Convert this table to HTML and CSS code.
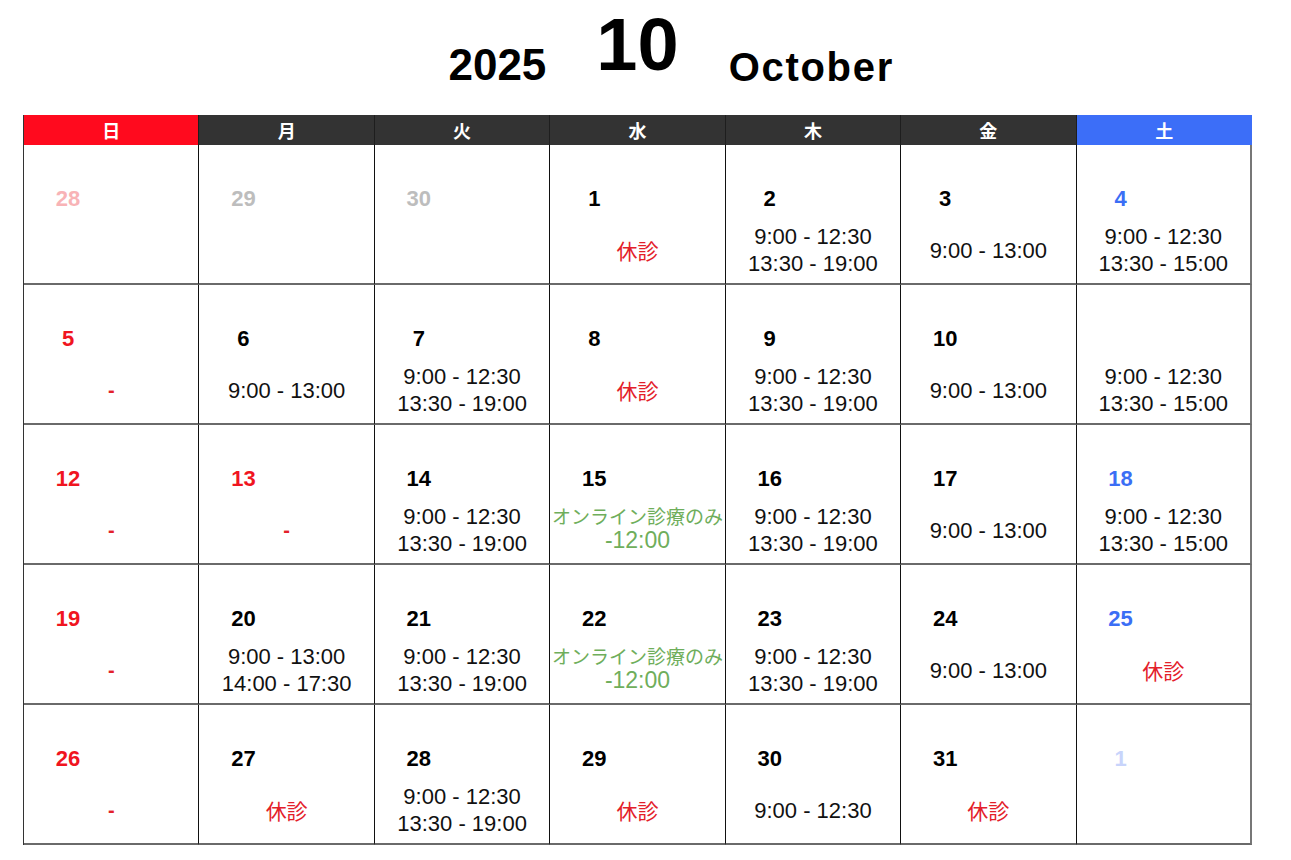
FILE: index.html
```html
<!DOCTYPE html>
<html lang="ja">
<head>
<meta charset="utf-8">
<title>2025 10 October</title>
<link rel="stylesheet" href="styles.css">
</head>
<body>
<div class="page">
  <div class="title">
    <span class="t-year">2025</span>
    <span class="t-month">10</span>
    <span class="t-name">October</span>
  </div>
  <div class="cal">
    <div class="hd sun">日</div>
    <div class="hd">月</div>
    <div class="hd">火</div>
    <div class="hd">水</div>
    <div class="hd">木</div>
    <div class="hd">金</div>
    <div class="hd sat">土</div>

    <div class="cell"><div class="num prev-sun">28</div><div class="body"></div></div>
    <div class="cell"><div class="num prev">29</div><div class="body"></div></div>
    <div class="cell"><div class="num prev">30</div><div class="body"></div></div>
    <div class="cell"><div class="num">1</div><div class="body"><span class="closed">休診</span></div></div>
    <div class="cell"><div class="num">2</div><div class="body"><span>9:00 - 12:30</span><span>13:30 - 19:00</span></div></div>
    <div class="cell"><div class="num">3</div><div class="body"><span>9:00 - 13:00</span></div></div>
    <div class="cell last"><div class="num blue">4</div><div class="body"><span>9:00 - 12:30</span><span>13:30 - 15:00</span></div></div>

    <div class="cell"><div class="num red">5</div><div class="body"><span class="dash">-</span></div></div>
    <div class="cell"><div class="num">6</div><div class="body"><span>9:00 - 13:00</span></div></div>
    <div class="cell"><div class="num">7</div><div class="body"><span>9:00 - 12:30</span><span>13:30 - 19:00</span></div></div>
    <div class="cell"><div class="num">8</div><div class="body"><span class="closed">休診</span></div></div>
    <div class="cell"><div class="num">9</div><div class="body"><span>9:00 - 12:30</span><span>13:30 - 19:00</span></div></div>
    <div class="cell"><div class="num">10</div><div class="body"><span>9:00 - 13:00</span></div></div>
    <div class="cell last"><div class="num blue"></div><div class="body"><span>9:00 - 12:30</span><span>13:30 - 15:00</span></div></div>

    <div class="cell"><div class="num red">12</div><div class="body"><span class="dash">-</span></div></div>
    <div class="cell"><div class="num red">13</div><div class="body"><span class="dash">-</span></div></div>
    <div class="cell"><div class="num">14</div><div class="body"><span>9:00 - 12:30</span><span>13:30 - 19:00</span></div></div>
    <div class="cell"><div class="num">15</div><div class="body online-body"><span class="online">オンライン診療のみ</span><span class="online-time">-12:00</span></div></div>
    <div class="cell"><div class="num">16</div><div class="body"><span>9:00 - 12:30</span><span>13:30 - 19:00</span></div></div>
    <div class="cell"><div class="num">17</div><div class="body"><span>9:00 - 13:00</span></div></div>
    <div class="cell last"><div class="num blue">18</div><div class="body"><span>9:00 - 12:30</span><span>13:30 - 15:00</span></div></div>

    <div class="cell"><div class="num red">19</div><div class="body"><span class="dash">-</span></div></div>
    <div class="cell"><div class="num">20</div><div class="body"><span>9:00 - 13:00</span><span>14:00 - 17:30</span></div></div>
    <div class="cell"><div class="num">21</div><div class="body"><span>9:00 - 12:30</span><span>13:30 - 19:00</span></div></div>
    <div class="cell"><div class="num">22</div><div class="body online-body"><span class="online">オンライン診療のみ</span><span class="online-time">-12:00</span></div></div>
    <div class="cell"><div class="num">23</div><div class="body"><span>9:00 - 12:30</span><span>13:30 - 19:00</span></div></div>
    <div class="cell"><div class="num">24</div><div class="body"><span>9:00 - 13:00</span></div></div>
    <div class="cell last"><div class="num blue">25</div><div class="body"><span class="closed">休診</span></div></div>

    <div class="cell"><div class="num red">26</div><div class="body"><span class="dash">-</span></div></div>
    <div class="cell"><div class="num">27</div><div class="body"><span class="closed">休診</span></div></div>
    <div class="cell"><div class="num">28</div><div class="body"><span>9:00 - 12:30</span><span>13:30 - 19:00</span></div></div>
    <div class="cell"><div class="num">29</div><div class="body"><span class="closed">休診</span></div></div>
    <div class="cell"><div class="num">30</div><div class="body"><span>9:00 - 12:30</span></div></div>
    <div class="cell"><div class="num">31</div><div class="body"><span class="closed">休診</span></div></div>
    <div class="cell last"><div class="num next">1</div><div class="body"></div></div>
  </div>
</div>
</body>
</html>
```

FILE: styles.css
```css
* { box-sizing: border-box; }
html, body { margin: 0; padding: 0; background: #fff; }
body {
  font-family: "Liberation Sans", Arial, "Noto Sans CJK JP", sans-serif;
  color: #111;
}
.page {
  padding: 8px 0 0 23px;
  width: 1252px;
}
.title {
  display: grid;
  grid-template-columns: 1fr auto 1fr;
  column-gap: 50px;
  align-items: end;
  width: 1229px;
  font-weight: bold;
  color: #000;
}
.title span { display: block; line-height: 1; }
.t-year { justify-self: end; font-size: 44px; }
.t-month { font-size: 74px; margin-bottom: 5px; }
.t-name { justify-self: start; font-size: 40px; letter-spacing: 1.7px; }

.cal {
  margin-top: 28px;
  width: 1229px;
  display: grid;
  grid-template-columns: repeat(7, 1fr);
  border-left: 1px solid #333;
}
.hd {
  height: 30px;
  background: #333333;
  color: #fff;
  font-family: "Noto Sans CJK JP", sans-serif;
  font-weight: bold;
  font-size: 18px;
  line-height: 30px;
  text-align: center;
  border-right: 1px solid #1e1e1e;
}
.hd.sun { background: #ff0a1e; }
.hd.sat { background: #3c6ef8; border-right: none; }

.cell {
  height: 140px;
  border-right: 1px solid #111;
  border-bottom: 2px solid #6a6a6a;
  display: grid;
  grid-template-rows: 68px 1fr;
}
.cell.last { border-right: 2px solid #777; }
.num {
  padding-top: 40px;
  margin-left: 20px;
  width: 48px;
  text-align: center;
  font-weight: bold;
  font-size: 22px;
  line-height: 28px;
  color: #000;
}
.num.red { color: #f0151f; }
.num.blue { color: #3b6ef5; }
.num.prev { color: #bdbdbd; }
.num.prev-sun { color: #f8b3b6; }
.num.next { color: #c8d4fb; }

.body {
  padding-top: 4px;
  display: flex;
  flex-direction: column;
  align-items: center;
  justify-content: center;
  font-size: 22px;
  line-height: 27px;
  color: #111;
  white-space: nowrap;
}
.body.online-body { padding-top: 0; }
.closed {
  font-family: "Noto Sans CJK JP", sans-serif;
  font-size: 21px;
  line-height: 27px;
  color: #e3202a;
}
.dash {
  color: #e3202a;
  font-weight: bold;
  font-size: 20px;
}
.online {
  font-family: "Noto Sans CJK JP", sans-serif;
  font-size: 19px;
  line-height: 24px;
  color: #6fae5b;
}
.online-time {
  font-size: 23px;
  line-height: 24px;
  color: #6fae5b;
}
```
